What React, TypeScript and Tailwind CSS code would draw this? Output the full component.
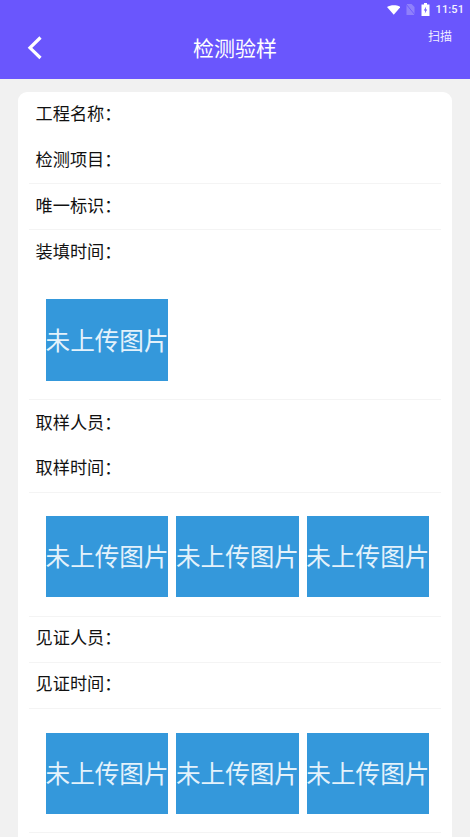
import React from "react";

const font = { fontFamily: '"Noto Sans CJK SC", "Noto Sans", sans-serif' };

function Row({ label, line = true, tall = false }: { label: string; line?: boolean; tall?: boolean }) {
  return (
    <div className={`${tall ? "h-[46.5px]" : "h-[46px]"} pb-[4px] flex items-center pl-[6.5px] mx-[11px] ${line ? "border-b border-[#f4f4f4]" : ""}`}>
      <span className="text-[17.2px] leading-none text-[#111]">{label}：</span>
    </div>
  );
}

function Pic() {
  return (
    <div className="w-[122.5px] h-[81.6px] bg-[#3498db] flex items-center justify-center overflow-hidden shrink-0">
      <span className="text-[24.6px] leading-none text-[#e4f2fb] whitespace-nowrap -mt-[2px]">未上传图片</span>
    </div>
  );
}

function Pics({ n, last = false }: { n: number; last?: boolean }) {
  return (
    <div className={`${last ? "h-[124.5px] pt-[24px]" : "h-[124px] pt-[23px]"} mx-[11px] flex items-start gap-[7.9px] pl-[16.8px] border-b border-[#f4f4f4]`}>
      {Array.from({ length: n }).map((_, i) => (
        <Pic key={i} />
      ))}
    </div>
  );
}

export default function App() {
  return (
    <div className="w-[470px] h-[837px] overflow-hidden bg-[#f1f1f1] flex flex-col" style={font}>
      <header className="relative h-[79px] shrink-0 bg-[#6a56fd] text-white">
        <div className="absolute right-[6px] top-[2px] flex items-center h-[15px]">
          <svg width="13.5" height="10" viewBox="0 0 14 10"><path d="M0 1.8C4 -0.6 10 -0.6 14 1.8L7 10Z" fill="#fff" /></svg>
          <svg width="9" height="11" viewBox="0 0 9 11" className="ml-[6px]">
            <path d="M0.5 0H5.5L8.5 3V11H0.5Z" fill="#8f80fb" />
            <path d="M0 0L9 11" stroke="#6a56fd" strokeWidth="0.9" />
          </svg>
          <svg width="9" height="13" viewBox="0 0 9 13" className="ml-[6px]">
            <path d="M3 0H6V1.5H8.5V13H0.5V1.5H3Z" fill="#fff" />
            <path d="M5.2 3.5L2.8 7.5H4.3L3.8 10.5L6.2 6.5H4.7Z" fill="#6a56fd" />
          </svg>
          <span className="ml-[5.5px] text-[11px] font-medium leading-none tracking-[0.1px] text-[#f4f2ff]" style={{ fontFamily: 'Roboto, sans-serif' }}>11:51</span>
        </div>
        <svg width="18" height="26" viewBox="0 0 18 26" className="absolute left-[26px] top-[35px]">
          <path d="M14.5 2.5L4 12.8L14.5 23" fill="none" stroke="#fff" strokeWidth="3.2" />
        </svg>
        <div className="absolute left-0 right-0 top-[33px] text-center text-[21px] leading-[28px]">检测验样</div>
        <div className="absolute right-[18px] top-[27px] text-[12px] leading-[17px] text-[#f0eeff]">扫描</div>
      </header>
      <main className="mx-[18px] mt-[13px] bg-white rounded-t-[9px] flex-1">
        <Row label="工程名称" line={false} />
        <Row label="检测项目" />
        <Row label="唯一标识" />
        <Row label="装填时间" line={false} />
        <Pics n={1} />
        <Row label="取样人员" line={false} tall />
        <Row label="取样时间" />
        <Pics n={3} />
        <Row label="见证人员" />
        <Row label="见证时间" />
        <Pics n={3} last />
      </main>
    </div>
  );
}
